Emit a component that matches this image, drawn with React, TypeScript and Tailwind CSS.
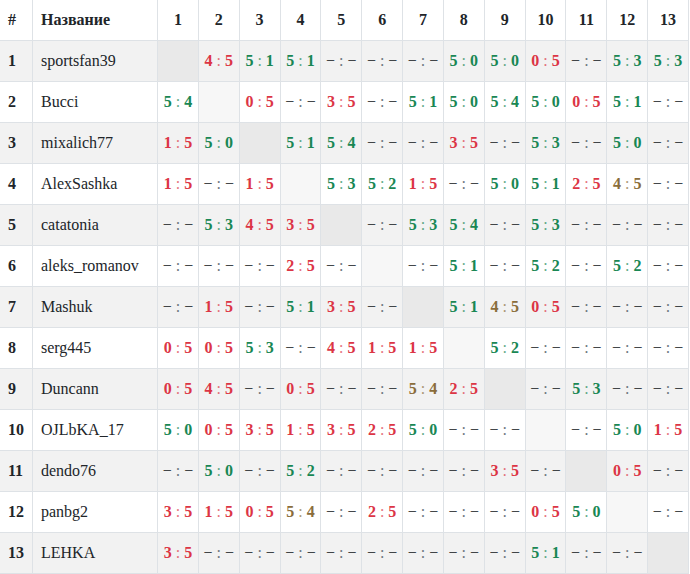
import React from "react";

const names = [
  "sportsfan39",
  "Bucci",
  "mixalich77",
  "AlexSashka",
  "catatonia",
  "aleks_romanov",
  "Mashuk",
  "serg445",
  "Duncann",
  "OJLbKA_17",
  "dendo76",
  "panbg2",
  "LEHKA",
];

const data: string[][] = [
  ["x", "r45", "g51", "g51", "-", "-", "-", "g50", "g50", "r05", "-", "g53", "g53"],
  ["g54", "x", "r05", "-", "r35", "-", "g51", "g50", "g54", "g50", "r05", "g51", "-"],
  ["r15", "g50", "x", "g51", "g54", "-", "-", "r35", "-", "g53", "-", "g50", "-"],
  ["r15", "-", "r15", "x", "g53", "g52", "r15", "-", "g50", "g51", "r25", "b45", "-"],
  ["-", "g53", "r45", "r35", "x", "-", "g53", "g54", "-", "g53", "-", "-", "-"],
  ["-", "-", "-", "r25", "-", "x", "-", "g51", "-", "g52", "-", "g52", "-"],
  ["-", "r15", "-", "g51", "r35", "-", "x", "g51", "b45", "r05", "-", "-", "-"],
  ["r05", "r05", "g53", "-", "r45", "r15", "r15", "x", "g52", "-", "-", "-", "-"],
  ["r05", "r45", "-", "r05", "-", "-", "b54", "r25", "x", "-", "g53", "-", "-"],
  ["g50", "r05", "r35", "r15", "r35", "r25", "g50", "-", "-", "x", "-", "g50", "r15"],
  ["-", "g50", "-", "g52", "-", "-", "-", "-", "r35", "-", "x", "r05", "-"],
  ["r35", "r15", "r05", "b54", "-", "r25", "-", "-", "-", "r05", "g50", "x", "-"],
  ["r35", "-", "-", "-", "-", "-", "-", "-", "-", "g51", "-", "-", "x"],
];

function Score({ v }: { v: string }) {
  if (v === "-") {
    return (
      <span className="text-[#212529]">
        − <span className="text-[#6c757d]">:</span> −
      </span>
    );
  }
  const t = v[0];
  const color =
    t === "r" ? "text-[#dc3545]" : t === "g" ? "text-[#198754]" : "text-[#8a6d3b]";
  return (
    <span className={color}>
      <b className="font-bold">{v[1]}</b>{" "}
      <span className="font-normal opacity-70">:</span>{" "}
      <b className="font-bold">{v[2]}</b>
    </span>
  );
}

const cell = "border-r border-b border-[#dee2e6]";

export default function App() {
  const cols = Array.from({ length: 13 }, (_, i) => i + 1);
  return (
    <div className="w-[690px] h-[574px] overflow-hidden bg-white text-[#212529] font-['Liberation_Serif','Times_New_Roman',serif]">
      <table className="w-[689px] table-fixed border-separate border-spacing-0 text-base leading-6 text-[#212529] font-['Liberation_Serif','Times_New_Roman',serif]">
        <colgroup>
          <col className="w-[33px]" />
          <col className="w-[125px]" />
          {cols.map((c) => (
            <col key={c} />
          ))}
        </colgroup>
        <thead>
          <tr>
            <th className={`h-[41px] px-2 text-left font-bold ${cell}`}>#</th>
            <th className={`px-2 text-left font-bold ${cell}`}>Название</th>
            {cols.map((c) => (
              <th key={c} className={`px-0 text-center font-bold ${cell}`}>
                {c}
              </th>
            ))}
          </tr>
        </thead>
        <tbody>
          {names.map((n, ri) => {
            const striped = ri % 2 === 0;
            const rowBg = striped ? "bg-[#f2f2f2]" : "bg-white";
            return (
              <tr key={n} className={rowBg}>
                <td className={`h-[41px] px-2 text-left font-bold ${cell}`}>{ri + 1}</td>
                <td className={`px-2 text-left whitespace-nowrap ${cell}`}>{n}</td>
                {data[ri].map((v, ci) => {
                  if (v === "x") {
                    return (
                      <td
                        key={ci}
                        className={`${cell} ${striped ? "bg-[#e9e9e9]" : "bg-[#f7f7f7]"}`}
                      />
                    );
                  }
                  return (
                    <td key={ci} className={`px-0 text-center whitespace-nowrap ${cell}`}>
                      <Score v={v} />
                    </td>
                  );
                })}
              </tr>
            );
          })}
        </tbody>
      </table>
    </div>
  );
}
